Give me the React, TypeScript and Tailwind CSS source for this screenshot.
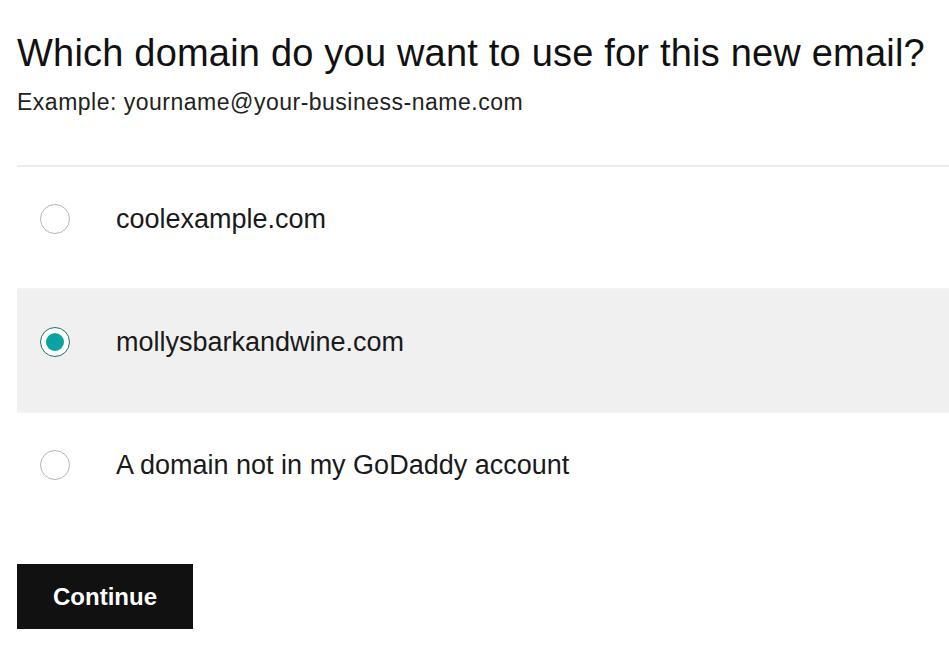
import { useState } from "react";

const DOMAINS = [
  "coolexample.com",
  "mollysbarkandwine.com",
  "A domain not in my GoDaddy account",
];

export default function App() {
  const [selected, setSelected] = useState(1);

  return (
    <div className="min-h-screen bg-white pl-[17px] pt-[30px] font-['Liberation_Sans',Arial,sans-serif] text-[#111]">
      <h1 className="text-[38px] leading-[46px] tracking-[0.2px] whitespace-nowrap">
        Which domain do you want to use for this new email?
      </h1>
      <p className="mt-[12px] text-[23px] leading-[28px] tracking-[0.5px] text-[#222]">
        Example: yourname@your-business-name.com
      </p>

      <div className="mt-[49px] w-[940px] border-t-2 border-[#ececec]">
        {DOMAINS.map((domain, index) => {
          const isSelected = index === selected;
          const isLast = index === DOMAINS.length - 1;
          return (
            <label
              key={domain}
              onClick={() => setSelected(index)}
              className={
                "block h-[123px] cursor-pointer pl-[23px] pt-[37px] " +
                (isLast ? "" : "border-b-2 border-[#f3f3f3] ") +
                (isSelected ? "bg-[#f0f0f0]" : "bg-white")
              }
            >
              <div className="flex h-[30px] items-center">
                <span
                  className={
                    "flex h-[30px] w-[30px] shrink-0 items-center justify-center rounded-full border bg-white " +
                    (isSelected ? "border-[#1d6f70]" : "border-[#b5b5b5]")
                  }
                >
                  {isSelected && <span className="h-[18px] w-[18px] rounded-full bg-[#0aa2a3]" />}
                </span>
                <span className="ml-[46px] whitespace-nowrap text-[27px] text-[#1a1a1a]">{domain}</span>
              </div>
            </label>
          );
        })}
      </div>

      <button
        type="button"
        className="mt-[28px] h-[65px] w-[176px] bg-[#111] text-[24px] font-bold text-white"
      >
        Continue
      </button>
    </div>
  );
}
